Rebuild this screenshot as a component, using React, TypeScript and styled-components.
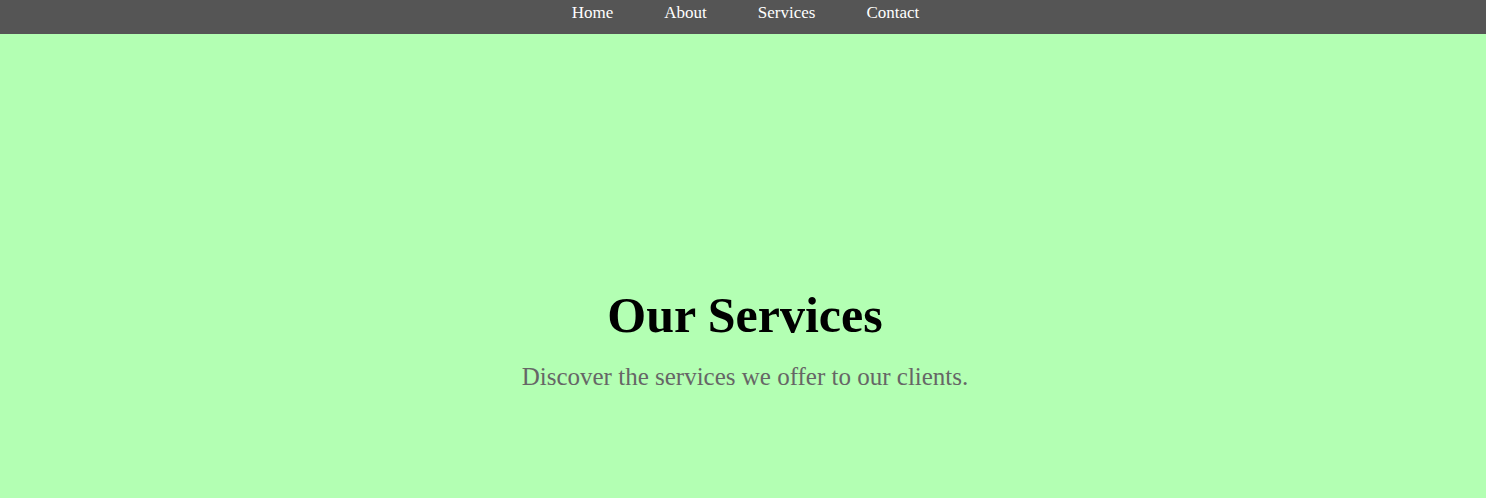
import React from "react";
import styled, { createGlobalStyle } from "styled-components";

const GlobalStyle = createGlobalStyle`
  html, body {
    margin: 0;
    padding: 0;
    background: #b3ffb3;
    font-family: "Liberation Serif", "Times New Roman", serif;
  }
`;

const NavBar = styled.nav`
  background: #555555;
  height: 34px;
  box-sizing: border-box;
  padding: 3px 0 0 5px;
  display: flex;
  justify-content: center;
  align-items: flex-start;
`;

const NavList = styled.ul`
  list-style: none;
  margin: 0;
  padding: 0;
  display: flex;
  gap: 51px;
`;

const NavLink = styled.a`
  color: #ffffff;
  text-decoration: none;
  font-size: 17px;
  line-height: 20px;
`;

const Hero = styled.section`
  background: #b3ffb3;
  height: 464px;
  display: flex;
  flex-direction: column;
  align-items: center;
  padding: 253px 0 0 4px;
  box-sizing: border-box;
  text-align: center;
`;

const Title = styled.h1`
  margin: 0;
  font-size: 50px;
  font-weight: bold;
  color: #000;
  line-height: 1.15;
`;

const Subtitle = styled.p`
  margin: 18px 0 0;
  font-size: 25px;
  color: #666666;
  line-height: 1.15;
`;

const links = ["Home", "About", "Services", "Contact"];

export default function App() {
  return (
    <>
      <GlobalStyle />
      <NavBar>
        <NavList>
          {links.map((l) => (
            <li key={l}>
              <NavLink href="#">{l}</NavLink>
            </li>
          ))}
        </NavList>
      </NavBar>
      <Hero>
        <Title>Our Services</Title>
        <Subtitle>Discover the services we offer to our clients.</Subtitle>
      </Hero>
    </>
  );
}
